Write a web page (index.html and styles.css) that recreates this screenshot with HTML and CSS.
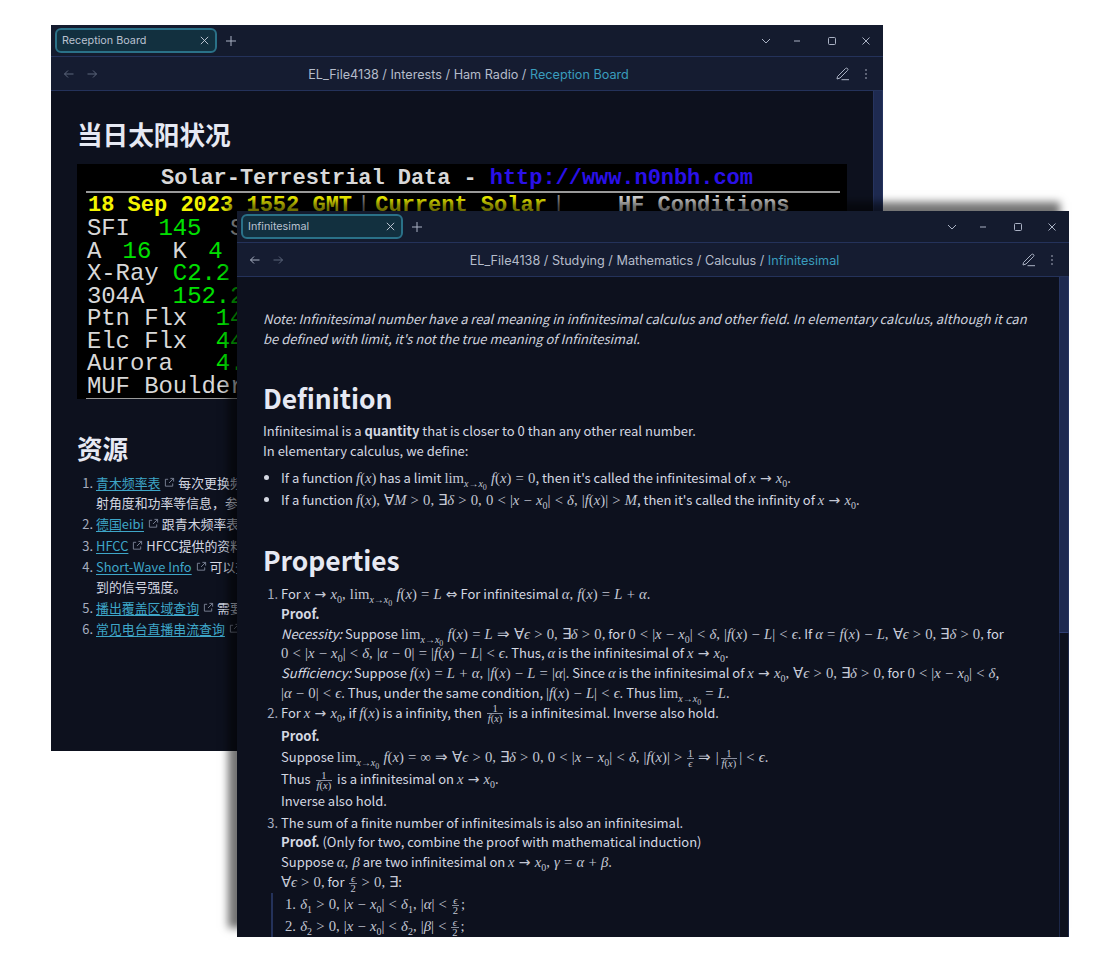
FILE: index.html
```html
<!DOCTYPE html>
<html lang="en">
<head>
<meta charset="UTF-8" />
<title>Notes</title>
<link rel="stylesheet" href="styles.css">
</head>
<body>

<!-- back window -->
<section class="win win-back">
  <div class="tabbar">
    <div class="tab"><span class="tab-name">Reception Board</span>
      <svg class="ic" viewBox="0 0 12 12"><path d="M2 2l8 8M10 2l-8 8"/></svg></div>
    <svg class="ic plus" viewBox="0 0 12 12"><path d="M6 1v10M1 6h10"/></svg>
    <div class="winbtns">
      <svg class="ic" viewBox="0 0 12 12"><path d="M2 4l4 4 4-4"/></svg>
      <svg class="ic" viewBox="0 0 12 12"><path d="M3 6h6"/></svg>
      <svg class="ic" viewBox="0 0 12 12"><rect x="2.5" y="2.5" width="7" height="7" rx="1"/></svg>
      <svg class="ic" viewBox="0 0 12 12"><path d="M2.5 2.5l7 7M9.5 2.5l-7 7"/></svg>
    </div>
  </div>
  <div class="toolbar">
    <div class="nav">
      <svg class="ic dim" viewBox="0 0 12 12"><path d="M10.500 6h-9M5 2.500L1.500 6 5 9.500"/></svg>
      <svg class="ic dim" viewBox="0 0 12 12"><path d="M1.500 6h9M7 2.500L10.500 6 7 9.500"/></svg>
    </div>
    <div class="crumbs">EL_File4138 / Interests / Ham Radio / <span class="cur">Reception Board</span></div>
    <div class="tools">
      <svg class="ic pen" viewBox="0 0 14 14"><path d="M1.500 9.500L9.500 1.500q1-.8 2 0t0 2L4 11l-3 1zM5.500 12.700h7.500"/></svg>
      <svg class="ic dots" viewBox="0 0 12 12"><path d="M6 1.500v1M6 5.500v1M6 9.500v1"/></svg>
    </div>
  </div>
  <div class="body body-back">
    <h1 class="h-cjk">当日太阳状况</h1>
    <div class="solar">
      <div class="sol-title">Solar-Terrestrial Data - <span class="sol-link">http://www.n0nbh.com</span></div>
      <div class="sol-rule"></div>
      <div class="sol-date">18 Sep 2023 1552 GMT<span class="sol-bar">|</span>Current Solar<span class="sol-bar">|</span>    <span class="sol-w">HF Conditions</span></div>
      <div class="sol-row">SFI  <span class="g">145</span>  S</div>
      <div class="sol-row sol-tight">A <span class="g">16</span> K <span class="g">4</span> /</div>
      <div class="sol-row">X-Ray <span class="g">C2.2</span></div>
      <div class="sol-row">304A  <span class="g">152.2</span></div>
      <div class="sol-row">Ptn Flx  <span class="g">14</span></div>
      <div class="sol-row">Elc Flx  <span class="g">44</span></div>
      <div class="sol-row">Aurora   <span class="g">4.</span></div>
      <div class="sol-row">MUF Boulder</div>
      <div class="sol-rule sol-rule-end"></div>
    </div>
    <h1 class="h-cjk h-res">资源</h1>
    <ol class="res">
      <li><a>青木频率表</a><svg class="ext" viewBox="0 0 12 12"><path d="M9.500 7v3h-8V2.500h3M7 1.500h3.500V5M10.500 1.500L5.500 6.500"/></svg> 每次更换频率<br>射角度和功率等信息，参考</li>
      <li><a>德国eibi</a><svg class="ext" viewBox="0 0 12 12"><path d="M9.500 7v3h-8V2.500h3M7 1.500h3.500V5M10.500 1.500L5.500 6.500"/></svg> 跟青木频率表</li>
      <li><a>HFCC</a><svg class="ext" viewBox="0 0 12 12"><path d="M9.500 7v3h-8V2.500h3M7 1.500h3.500V5M10.500 1.500L5.500 6.500"/></svg> HFCC提供的资料</li>
      <li><a>Short-Wave Info</a><svg class="ext" viewBox="0 0 12 12"><path d="M9.500 7v3h-8V2.500h3M7 1.500h3.500V5M10.500 1.500L5.500 6.500"/></svg> 可以查<br>到的信号强度。</li>
      <li><a>播出覆盖区域查询</a><svg class="ext" viewBox="0 0 12 12"><path d="M9.500 7v3h-8V2.500h3M7 1.500h3.500V5M10.500 1.500L5.500 6.500"/></svg> 需要</li>
      <li><a>常见电台直播串流查询</a><svg class="ext" viewBox="0 0 12 12"><path d="M9.500 7v3h-8V2.500h3M7 1.500h3.500V5M10.500 1.500L5.500 6.500"/></svg></li>
    </ol>
    <div class="track"><div class="thumb thumb-back"></div></div>
  </div>
</section>

<!-- front window -->
<section class="win win-front">
  <div class="tabbar">
    <div class="tab"><span class="tab-name">Infinitesimal</span>
      <svg class="ic" viewBox="0 0 12 12"><path d="M2 2l8 8M10 2l-8 8"/></svg></div>
    <svg class="ic plus" viewBox="0 0 12 12"><path d="M6 1v10M1 6h10"/></svg>
    <div class="winbtns">
      <svg class="ic" viewBox="0 0 12 12"><path d="M2 4l4 4 4-4"/></svg>
      <svg class="ic" viewBox="0 0 12 12"><path d="M3 6h6"/></svg>
      <svg class="ic" viewBox="0 0 12 12"><rect x="2.5" y="2.5" width="7" height="7" rx="1"/></svg>
      <svg class="ic" viewBox="0 0 12 12"><path d="M2.5 2.5l7 7M9.5 2.5l-7 7"/></svg>
    </div>
  </div>
  <div class="toolbar">
    <div class="nav">
      <svg class="ic" viewBox="0 0 12 12"><path d="M10.500 6h-9M5 2.500L1.500 6 5 9.500"/></svg>
      <svg class="ic dim" viewBox="0 0 12 12"><path d="M1.500 6h9M7 2.500L10.500 6 7 9.500"/></svg>
    </div>
    <div class="crumbs">EL_File4138 / Studying / Mathematics / Calculus / <span class="cur">Infinitesimal</span></div>
    <div class="tools">
      <svg class="ic pen" viewBox="0 0 14 14"><path d="M1.500 9.500L9.500 1.500q1-.8 2 0t0 2L4 11l-3 1zM5.500 12.700h7.500"/></svg>
      <svg class="ic dots" viewBox="0 0 12 12"><path d="M6 1.500v1M6 5.500v1M6 9.500v1"/></svg>
    </div>
  </div>
  <div class="body body-front">
    <p class="note"><em>Note: Infinitesimal number have a real meaning in infinitesimal calculus and other field. In elementary calculus, although it can<br>be defined with limit, it's not the true meaning of Infinitesimal.</em></p>

    <h2>Definition</h2>
    <p class="ln">Infinitesimal is a <b>quantity</b> that is closer to 0 than any other real number.</p>
    <p class="ln">In elementary calculus, we define:</p>
    <ul class="defs">
      <li>If a function <span class="m"><i>f</i>(<i>x</i>)</span> has a limit <span class="m">lim<sub><i>x</i>→<i>x</i><sub>0</sub></sub> <i>f</i>(<i>x</i>) = 0</span>, then it's called the infinitesimal of <span class="m"><i>x</i> <span class="ar">→</span> <i>x</i><sub>0</sub></span>.</li>
      <li>If a function <span class="m"><i>f</i>(<i>x</i>), ∀<i>M</i> &gt; 0, ∃<i>δ</i> &gt; 0, 0 &lt; |<i>x</i> − <i>x</i><sub>0</sub>| &lt; <i>δ</i>, |<i>f</i>(<i>x</i>)| &gt; <i>M</i></span>, then it's called the infinity of <span class="m"><i>x</i> <span class="ar">→</span> <i>x</i><sub>0</sub></span>.</li>
    </ul>

    <h2 class="h-props">Properties</h2>
    <ol class="props">
      <li>
        <div class="ln">For <span class="m"><i>x</i> <span class="ar">→</span> <i>x</i><sub>0</sub>, lim<sub><i>x</i>→<i>x</i><sub>0</sub></sub> <i>f</i>(<i>x</i>) = <i>L</i> <span class="ar">⇔</span></span> For infinitesimal <span class="m"><i>α</i>, <i>f</i>(<i>x</i>) = <i>L</i> + <i>α</i></span>.</div>
        <div class="ln"><b>Proof.</b></div>
        <div class="ln"><em>Necessity:</em> Suppose <span class="m">lim<sub><i>x</i>→<i>x</i><sub>0</sub></sub> <i>f</i>(<i>x</i>) = <i>L</i> ⇒ ∀<i>ϵ</i> &gt; 0, ∃<i>δ</i> &gt; 0,</span> for <span class="m">0 &lt; |<i>x</i> − <i>x</i><sub>0</sub>| &lt; <i>δ</i>, |<i>f</i>(<i>x</i>) − <i>L</i>| &lt; <i>ϵ</i></span>. If <span class="m"><i>α</i> = <i>f</i>(<i>x</i>) − <i>L</i>, ∀<i>ϵ</i> &gt; 0, ∃<i>δ</i> &gt; 0,</span> for</div>
        <div class="ln"><span class="m">0 &lt; |<i>x</i> − <i>x</i><sub>0</sub>| &lt; <i>δ</i>, |<i>α</i> − 0| = |<i>f</i>(<i>x</i>) − <i>L</i>| &lt; <i>ϵ</i></span>. Thus, <span class="m"><i>α</i></span> is the infinitesimal of <span class="m"><i>x</i> <span class="ar">→</span> <i>x</i><sub>0</sub></span>.</div>
        <div class="ln"><em>Sufficiency:</em> Suppose <span class="m"><i>f</i>(<i>x</i>) = <i>L</i> + <i>α</i>, |<i>f</i>(<i>x</i>) − <i>L</i> = |<i>α</i>|</span>. Since <span class="m"><i>α</i></span> is the infinitesimal of <span class="m"><i>x</i> <span class="ar">→</span> <i>x</i><sub>0</sub>, ∀<i>ϵ</i> &gt; 0, ∃<i>δ</i> &gt; 0,</span> for <span class="m">0 &lt; |<i>x</i> − <i>x</i><sub>0</sub>| &lt; <i>δ</i></span>,</div>
        <div class="ln"><span class="m">|<i>α</i> − 0| &lt; <i>ϵ</i></span>. Thus, under the same condition, <span class="m">|<i>f</i>(<i>x</i>) − <i>L</i>| &lt; <i>ϵ</i></span>. Thus <span class="m">lim<sub><i>x</i>→<i>x</i><sub>0</sub></sub> = <i>L</i></span>.</div>
      </li>
      <li>
        <div class="ln ln-first">For <span class="m"><i>x</i> <span class="ar">→</span> <i>x</i><sub>0</sub></span>, if <span class="m"><i>f</i>(<i>x</i>)</span> is a infinity, then <span class="frac"><span>1</span><span class="den"><i>f</i>(<i>x</i>)</span></span> is a infinitesimal. Inverse also hold.</div>
        <div class="ln ln-tall"><b>Proof.</b></div>
        <div class="ln ln-tall">Suppose <span class="m">lim<sub><i>x</i>→<i>x</i><sub>0</sub></sub> <i>f</i>(<i>x</i>) = ∞ ⇒ ∀<i>ϵ</i> &gt; 0, ∃<i>δ</i> &gt; 0, 0 &lt; |<i>x</i> − <i>x</i><sub>0</sub>| &lt; <i>δ</i>, |<i>f</i>(<i>x</i>)| &gt;</span> <span class="frac"><span>1</span><span class="den"><i>ϵ</i></span></span> <span class="m">⇒ |</span><span class="frac"><span>1</span><span class="den"><i>f</i>(<i>x</i>)</span></span><span class="m">| &lt; <i>ϵ</i></span>.</div>
        <div class="ln ln-tall">Thus <span class="frac"><span>1</span><span class="den"><i>f</i>(<i>x</i>)</span></span> is a infinitesimal on <span class="m"><i>x</i> <span class="ar">→</span> <i>x</i><sub>0</sub></span>.</div>
        <div class="ln ln-tall">Inverse also hold.</div>
      </li>
      <li>
        <div class="ln">The sum of a finite number of infinitesimals is also an infinitesimal.</div>
        <div class="ln"><b>Proof.</b> (Only for two, combine the proof with mathematical induction)</div>
        <div class="ln">Suppose <span class="m"><i>α</i>, <i>β</i></span> are two infinitesimal on <span class="m"><i>x</i> <span class="ar">→</span> <i>x</i><sub>0</sub>, <i>γ</i> = <i>α</i> + <i>β</i></span>.</div>
        <div class="ln"><span class="m">∀<i>ϵ</i> &gt; 0,</span> for <span class="frac"><span><i>ϵ</i></span><span class="den">2</span></span> <span class="m">&gt; 0, ∃</span>:</div>
        <div class="quote">
          <div class="ln ln-tall"><span class="m">1. <i>δ</i><sub>1</sub> &gt; 0, |<i>x</i> − <i>x</i><sub>0</sub>| &lt; <i>δ</i><sub>1</sub>, |<i>α</i>| &lt;</span> <span class="frac"><span><i>ϵ</i></span><span class="den">2</span></span><span class="m">;</span></div>
          <div class="ln ln-tall"><span class="m">2. <i>δ</i><sub>2</sub> &gt; 0, |<i>x</i> − <i>x</i><sub>0</sub>| &lt; <i>δ</i><sub>2</sub>, |<i>β</i>| &lt;</span> <span class="frac"><span><i>ϵ</i></span><span class="den">2</span></span><span class="m">;</span></div>
        </div>
      </li>
    </ol>
    <div class="track"><div class="thumb thumb-front"></div></div>
  </div>
</section>

</body>
</html>
```

FILE: styles.css
```css
html, body { margin: 0; height: 100%; background: #fff; }
body { position: relative; width: 1120px; height: 962px; overflow: hidden; font-family: "Noto Sans CJK SC", "Noto Sans", sans-serif; }

/* windows sit on a free canvas */
.win {
  position: absolute; width: 832px; height: 726px; display: flex; flex-direction: column;
  background: #0d111e; color: #d4d8e2; overflow: hidden;
}
.win-back { left: 51px; top: 25px; }
.win-front { left: 237px; top: 211px; overflow: visible; box-shadow: -9px -9px 8px rgba(0,0,0,.55); }

.ic { width: 12px; height: 12px; fill: none; stroke: #aab2c4; stroke-width: 1; flex: none; }
.ic.dim { stroke: #5d667c; }

.tabbar {
  height: 32px; box-sizing: border-box; display: flex; align-items: center; padding: 0 11px 0 4px;
  background: #141b2e; border-bottom: 1px solid #24325a; flex: none;
}
.tab {
  width: 162px; height: 25px; box-sizing: border-box; display: flex; align-items: center; justify-content: space-between;
  padding: 0 5px; background: #12303f; border: 2px solid #2a7188; border-radius: 6px;
}
.tab-name { font: 10.8px Inter, sans-serif; color: #b9c1d0; }
.tab .ic { width: 11px; height: 11px; stroke: #c8cedb; }
.plus { margin-left: 8px; }
.winbtns { margin-left: auto; display: flex; gap: 22px; width: 112px; }
.winbtns .ic { width: 12px; }
.winbtns .ic:nth-child(1) { margin-right: -3px; }
.winbtns .ic:nth-child(3) { margin-left: 1px; }

.toolbar {
  height: 34px; box-sizing: border-box; display: flex; align-items: center; padding: 0 11px 0 12px;
  background: #151c31; border-bottom: 1px solid #24325a; flex: none;
}
.nav { display: flex; gap: 11px; width: 200px; }
.crumbs { flex: 1; text-align: center; font: 12.65px Inter, sans-serif; color: #b5bccb; padding: 1px 0 0 2px; }
.cur { color: #3a9cbd; }
.tools { display: flex; align-items: center; justify-content: flex-end; gap: 10px; width: 200px; }
.pen { width: 14px; height: 14px; }
.dots { stroke: #c8cedb; stroke-width: 1.6; }

.body { flex: 1; position: relative; overflow: hidden; font-size: 13px; box-sizing: border-box; }
.track { position: absolute; top: 0; bottom: 0; right: 0; width: 10px; box-sizing: border-box; border-left: 1px solid #1c2748; border-right: 1px solid #1c2748; }
.thumb { margin: 0 -1px; background: #1e2a50; border-left: 1px solid #26345f; border-right: 1px solid #26345f; }
.thumb-back { height: 500px; }
.thumb-front { height: 355px; border-bottom: 1px solid #2f3f75; }

/* back window */
.body-back { padding: 26px 0 0 26px; }
.h-cjk { font-size: 25.6px; line-height: 34px; margin: 0 0 13px; color: #e6e9f3; font-weight: 700; }
.h-res { margin: 32px 0 0; }
.solar {
  width: 770px; height: 235px; background: #000; color: #d8d8d8; padding: 3px 0 0 10px; box-sizing: border-box; overflow: hidden;
  font-family: "Liberation Mono", monospace;
}
.sol-title, .sol-date, .sol-row { white-space: pre; }
.sol-title { font-size: 22px; font-weight: 700; line-height: 24px; padding-left: 74px; letter-spacing: -.05px; }
.sol-link { color: #2a10e8; }
.sol-rule { width: 754px; height: 2px; background: #9a9a9a; margin: 0 0 1px -1px; }
.sol-rule-end { margin-top: 0; }
.sol-date { font-size: 22px; font-weight: 700; line-height: 24px; color: #f4f400; padding-left: 1px; }
.sol-bar { color: #888; font-weight: 400; padding: 0 5px; }
.sol-w { color: #d8d8d8; margin-left: -5px; }
.sol-row { font-size: 24px; line-height: 22.5px; letter-spacing: -.1px; }
.sol-tight { word-spacing: 7px; }
.g { color: #00e000; }

.res { margin: 8px 0 0; padding: 0 0 0 19px; line-height: 20px; font-size: 12.9px; }
.res li { margin-bottom: 1.3px; white-space: nowrap; }
.res li::marker { color: #a6adbf; }
.res a { color: #3ea6c8; text-decoration: underline; text-underline-offset: 2px; }
.ext { width: 11px; height: 11px; margin-left: 4px; fill: none; stroke: #7e8698; stroke-width: 1; }

/* front window */
.body-front { padding: 32px 0 0 26px; }
.note { margin: 0 0 31px; line-height: 20px; color: #cfd3de; white-space: nowrap; }
h2 { font-size: 26.4px; line-height: 36px; margin: 0 0 5px; color: #e6e9f3; font-weight: 700; }
.h-props { margin: 31px 0 6px; }
.ln { margin: 0; height: 19.7px; line-height: 19.7px; white-space: nowrap; }
.ln-tall { height: 21.8px; line-height: 21.8px; }
.ln-first { height: 22px; line-height: 20px; }

.defs { margin: 7px 0 0; padding: 0 0 0 18px; }
.defs li { height: 22px; line-height: 22px; white-space: nowrap; }
.props { margin: 0; padding: 0 0 0 18px; }
.props li:nth-child(2) { margin-bottom: 1px; }
.props li::marker { color: #a6adbf; }
.quote { border-left: 2px solid #24325a; margin: 2px 0 0 -10px; padding-left: 12px; }

/* math, set by hand */
.m { font-family: "Liberation Serif", serif; font-size: 14.7px; line-height: 1; word-spacing: .5px; color: #c4c8d4; }
.m sub { font-size: .68em; line-height: 0; }
.m sub sub { font-size: .8em; }
.ar { font-family: "DejaVu Sans", sans-serif; font-size: 14px; }
.frac {
  display: inline-flex; flex-direction: column; align-items: center; vertical-align: middle; margin: 0 2px;
  font-family: "Liberation Serif", serif; font-size: 10.5px; line-height: 9px; color: #c4c8d4;
}
.den { border-top: 1px solid #8a90a0; padding: 0 1px; }
```
